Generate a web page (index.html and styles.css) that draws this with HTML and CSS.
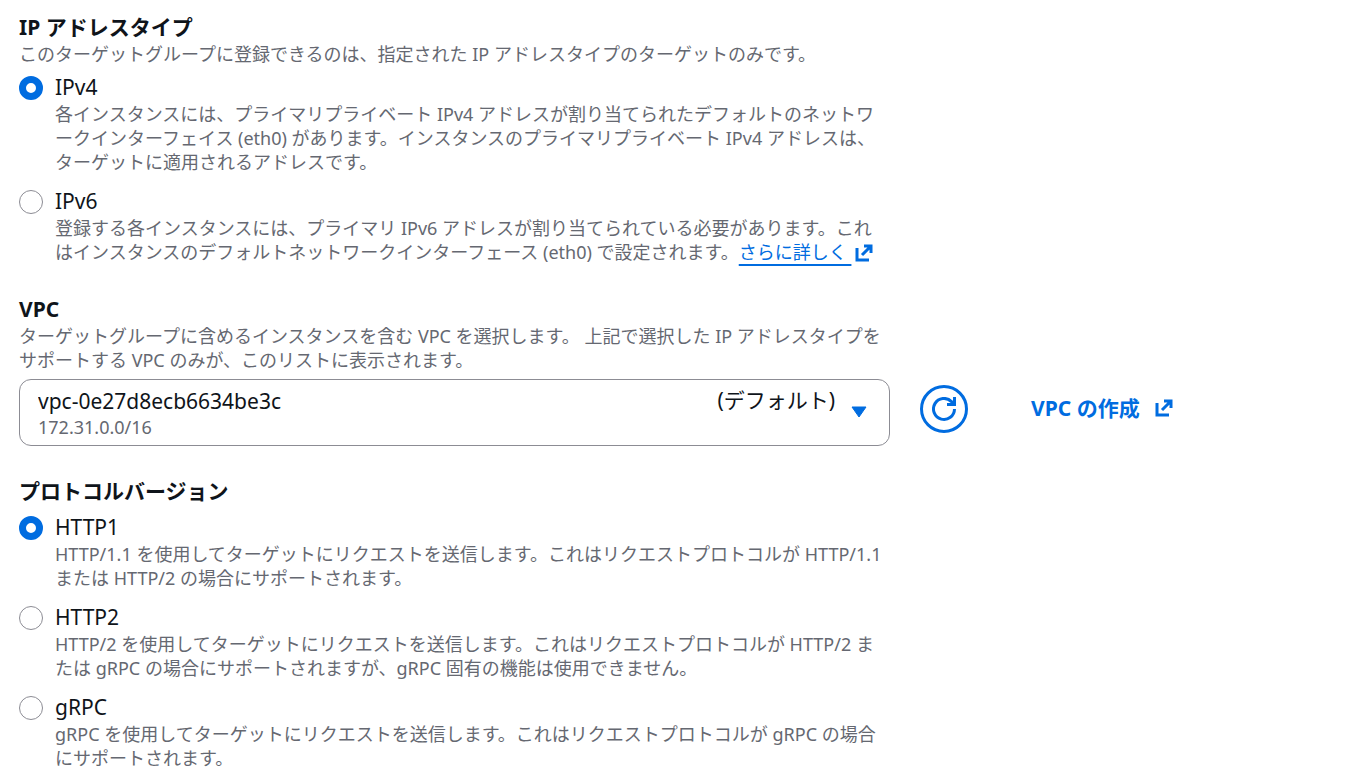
FILE: index.html
```html
<!DOCTYPE html>
<html lang="ja">
<head>
    <meta charset="UTF-8">
    <meta name="viewport" content="width=device-width, initial-scale=1.0">
    <title>ターゲットグループの作成</title>
    <link rel="stylesheet" href="styles.css">
</head>
<body>
    <form class="form">
        <fieldset class="field">
            <legend class="field-title">IP アドレスタイプ</legend>
            <p class="hint">このターゲットグループに登録できるのは、指定された IP アドレスタイプのターゲットのみです。</p>
            <div class="radio-list">
                <div class="radio-item">
                    <input type="radio" class="radio" name="ip-type" id="ipv4" aria-describedby="ipv4-hint" checked>
                    <div>
                        <label class="radio-label" for="ipv4">IPv4</label>
                        <p class="hint" id="ipv4-hint">各インスタンスには、プライマリプライベート IPv4 アドレスが割り当てられたデフォルトのネットワークインターフェイス (eth0) があります。インスタンスのプライマリプライベート IPv4 アドレスは、ターゲットに適用されるアドレスです。</p>
                    </div>
                </div>
                <div class="radio-item">
                    <input type="radio" class="radio" name="ip-type" id="ipv6" aria-describedby="ipv6-hint">
                    <div>
                        <label class="radio-label" for="ipv6">IPv6</label>
                        <p class="hint" id="ipv6-hint">登録する各インスタンスには、プライマリ IPv6 アドレスが割り当てられている必要があります。これはインスタンスのデフォルトネットワークインターフェース (eth0) で設定されます。<a class="learn-more" href="#">さらに詳しく&nbsp;<svg class="icon" viewBox="0 0 18 18" aria-hidden="true"><path d="M9 2h7v7M16 2 7 11M2 4v12h12"/></svg></a></p>
                    </div>
                </div>
            </div>
        </fieldset>

        <div class="field">
            <label class="field-title" for="vpc">VPC</label>
            <p class="hint">ターゲットグループに含めるインスタンスを含む VPC を選択します。 上記で選択した IP アドレスタイプをサポートする VPC のみが、このリストに表示されます。</p>
            <div class="vpc-row">
                <div class="select-box">
                    <select class="select" id="vpc">
                        <option>vpc-0e27d8ecb6634be3c</option>
                    </select>
                    <div class="select-info">
                        <span class="select-cidr">172.31.0.0/16</span>
                        <span class="select-tag">(デフォルト)</span>
                        <svg class="caret" viewBox="0 0 16 12" aria-hidden="true"><path d="M1 1h14L8 11z"/></svg>
                    </div>
                </div>
                <button type="button" class="refresh" aria-label="更新">
                    <svg class="refresh-icon" viewBox="0 0 24 24" aria-hidden="true"><path d="M22.500 12A10.500 10.500 0 1 1 19.500 4.600L22 7.500M22.500 0v7.500H15"/></svg>
                </button>
                <a class="create-link" href="#">VPC の作成
                    <svg class="icon" viewBox="0 0 18 18" aria-hidden="true"><path d="M9 2h7v7M16 2 7 11M2 4v12h12"/></svg>
                </a>
            </div>
        </div>

        <fieldset class="field">
            <legend class="field-title">プロトコルバージョン</legend>
            <div class="radio-list">
                <div class="radio-item">
                    <input type="radio" class="radio" name="protocol" id="http1" aria-describedby="http1-hint" checked>
                    <div>
                        <label class="radio-label" for="http1">HTTP1</label>
                        <p class="hint" id="http1-hint">HTTP/1.1 を使用してターゲットにリクエストを送信します。これはリクエストプロトコルが HTTP/1.1 または HTTP/2 の場合にサポートされます。</p>
                    </div>
                </div>
                <div class="radio-item">
                    <input type="radio" class="radio" name="protocol" id="http2" aria-describedby="http2-hint">
                    <div>
                        <label class="radio-label" for="http2">HTTP2</label>
                        <p class="hint" id="http2-hint">HTTP/2 を使用してターゲットにリクエストを送信します。これはリクエストプロトコルが HTTP/2 または gRPC の場合にサポートされますが、gRPC 固有の機能は使用できません。</p>
                    </div>
                </div>
                <div class="radio-item">
                    <input type="radio" class="radio" name="protocol" id="grpc" aria-describedby="grpc-hint">
                    <div>
                        <label class="radio-label" for="grpc">gRPC</label>
                        <p class="hint" id="grpc-hint">gRPC を使用してターゲットにリクエストを送信します。これはリクエストプロトコルが gRPC の場合にサポートされます。</p>
                    </div>
                </div>
            </div>
        </fieldset>
    </form>
</body>
</html>
```
FILE: styles.css
```css
* {
    box-sizing: border-box;
}
body {
    margin: 0;
    background-color: #fff;
    color: #0f141a;
    font-family: "Noto Sans", "Noto Sans CJK JP", sans-serif;
    font-size: 21px;
    line-height: 30px;
}
.form {
    display: flex;
    flex-direction: column;
    gap: 30px;
    padding: 12px 19px;
}
.field {
    margin: 0;
    padding: 0;
    border: none;
    min-width: 0;
}
.field-title {
    display: block;
    padding: 0;
    font-weight: bold;
}
.hint {
    margin: 0;
    max-width: 871px;
    color: #656871;
    font-size: 18px;
    line-height: 24px;
}
.radio-list {
    display: flex;
    flex-direction: column;
    gap: 12px;
    margin-top: 6px;
    max-width: 868px;
}
.radio-item {
    display: flex;
    align-items: flex-start;
    gap: 12px;
}
.radio {
    appearance: none;
    flex: none;
    width: 24px;
    height: 24px;
    margin: 4px 0 0;
    border: 1px solid #8c8c94;
    border-radius: 50%;
    background-color: #fff;
}
.radio:checked {
    border: 7px solid #006ce0;
}
.radio-label {
    display: block;
}
.icon {
    width: 18px;
    height: 18px;
    fill: none;
    stroke: #006ce0;
    stroke-width: 3;
}
.learn-more {
    color: #006ce0;
    text-decoration: underline 2px;
    text-underline-offset: 5px;
    white-space: nowrap;
}
.learn-more .icon {
    margin-left: 4px;
    vertical-align: -3px;
}
.vpc-row {
    display: flex;
    align-items: flex-start;
    margin-top: 7px;
}
/* the select and its extra info share one grid cell */
.select-box {
    display: grid;
    flex: 0 1 871px;
}
.select {
    grid-area: 1 / 1;
    appearance: none;
    width: 100%;
    padding: 6px 18px 29px;
    border: 1px solid #8c8c94;
    border-radius: 12px;
    background-color: #fff;
    color: #0f141a;
    font: inherit;
}
.select-info {
    grid-area: 1 / 1;
    display: grid;
    grid-template-columns: 1fr auto auto;
    column-gap: 16px;
    padding: 6px 23px 7px 19px;
    pointer-events: none;
}
.select-cidr {
    align-self: end;
    color: #656871;
    font-size: 18px;
    line-height: 24px;
}
.caret {
    align-self: center;
    width: 16px;
    height: 12px;
    fill: #006ce0;
    stroke: #006ce0;
    stroke-linejoin: round;
}
.refresh {
    display: flex;
    flex: none;
    align-items: center;
    justify-content: center;
    width: 48px;
    height: 48px;
    margin: 6px 0 0 30px;
    padding: 0;
    border: 3px solid #006ce0;
    border-radius: 50%;
    background-color: #fff;
    cursor: pointer;
}
.refresh-icon {
    width: 24px;
    height: 24px;
    fill: none;
    stroke: #006ce0;
    stroke-width: 3;
}
.create-link {
    display: flex;
    align-items: center;
    gap: 15px;
    margin: 14px 0 0 63px;
    color: #006ce0;
    font-weight: bold;
    text-decoration: none;
    white-space: nowrap;
}
```
